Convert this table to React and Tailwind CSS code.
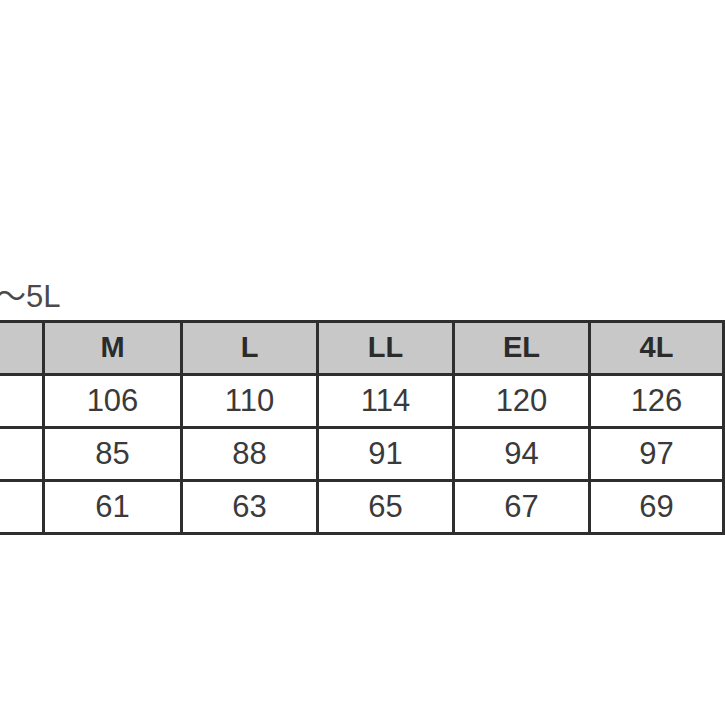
export default function App() {
  const heads = ["M", "L", "LL", "EL", "4L"];
  const rows = [
    ["106", "110", "114", "120", "126"],
    ["85", "88", "91", "94", "97"],
    ["61", "63", "65", "67", "69"],
  ];
  return (
    <div className="w-[725px] h-[725px] bg-white overflow-hidden" style={{ fontFamily: '"Liberation Sans", "Noto Sans CJK JP", sans-serif' }}>
      <div className="pt-[279px]">
        <div className="h-[36px] leading-[36px] text-[31px] text-[#4a4a4a] -ml-[5px] whitespace-nowrap">～5L</div>
        <div className="mt-[5px] -ml-[61px] w-[786px] grid grid-cols-[100px_135px_133px_133px_133px_131px] grid-rows-[50px_50px_50px_50px] gap-[3px] p-[3px] bg-[#2e2e2e]">
          <div className="bg-[#c8c8c8]" />
          {heads.map((h) => (
            <div key={h} className="bg-[#c8c8c8] flex items-center justify-center font-bold text-[29px] text-[#2b2b2b]">{h}</div>
          ))}
          {rows.map((r, i) => (
            <>
              <div key={"f" + i} className="bg-white" />
              {r.map((v, j) => (
                <div key={i + "-" + j} className="bg-white flex items-center justify-center text-[31px] text-[#3a3a3a]">{v}</div>
              ))}
            </>
          ))}
        </div>
      </div>
    </div>
  );
}
